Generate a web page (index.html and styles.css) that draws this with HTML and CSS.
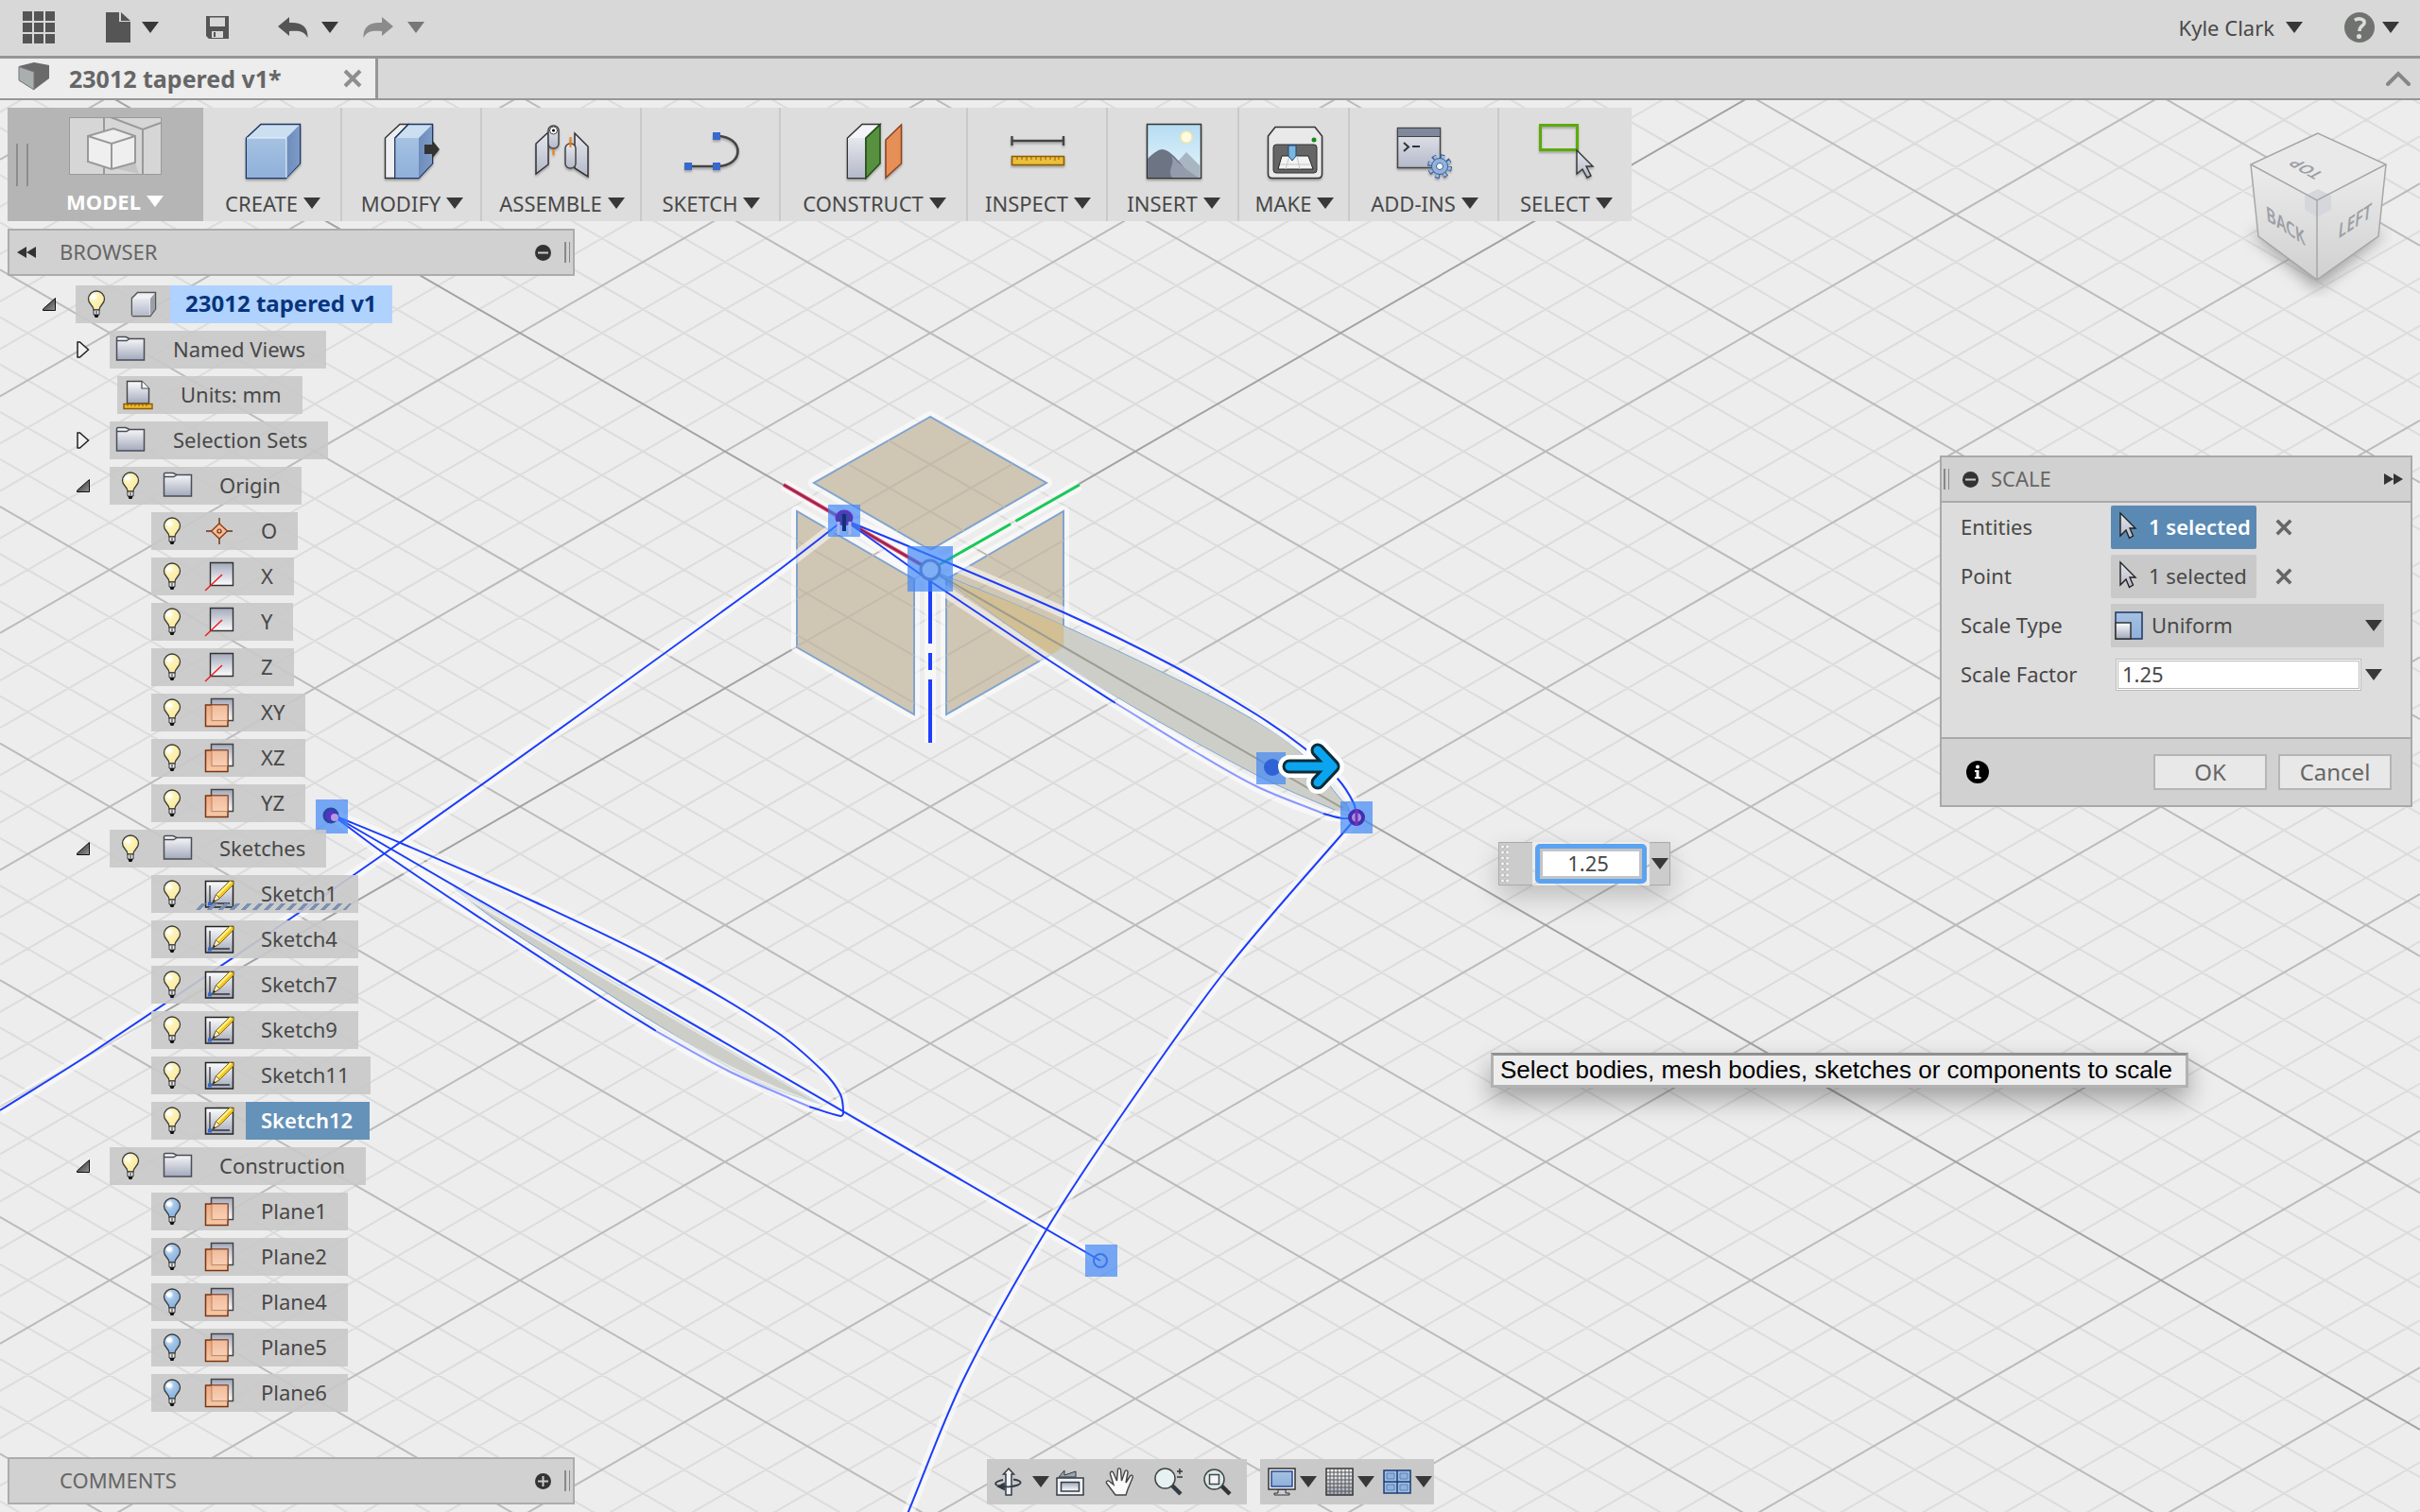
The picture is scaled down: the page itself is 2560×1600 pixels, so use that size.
FILE: index.html
```html
<!DOCTYPE html>
<html lang="en">
<head>
<meta charset="utf-8">
<title>23012 tapered v1*</title>
<link rel="stylesheet" href="styles.css">
</head>
<body>
<svg class="defs" width="0" height="0" aria-hidden="true">
  <defs>
    <linearGradient id="gBlue" x1="0" y1="0" x2="0" y2="1"><stop offset="0" stop-color="#a6c2e2"/><stop offset="1" stop-color="#8fb0da"/></linearGradient>
    <linearGradient id="gBlueSide" x1="0" y1="0" x2="1" y2="0"><stop offset="0" stop-color="#6c8cbb"/><stop offset="1" stop-color="#7f9bc6"/></linearGradient>
    <linearGradient id="gGrey" x1="0" y1="0" x2="0" y2="1"><stop offset="0" stop-color="#fdfdfe"/><stop offset="1" stop-color="#a3a9bb"/></linearGradient>
    <linearGradient id="gGreyUp" x1="0" y1="0" x2="0" y2="1"><stop offset="0" stop-color="#a3a9bb"/><stop offset="1" stop-color="#fdfdfe"/></linearGradient>
    <linearGradient id="gSoft" x1="0" y1="0" x2="0" y2="1"><stop offset="0" stop-color="#e6e8ee"/><stop offset="1" stop-color="#b4b9c9"/></linearGradient>
    <linearGradient id="gDark" x1="0" y1="0" x2="1" y2="1"><stop offset="0" stop-color="#222"/><stop offset="1" stop-color="#999"/></linearGradient>
    <linearGradient id="gSky" x1="0" y1="0" x2="0" y2="1"><stop offset="0" stop-color="#b5dcf2"/><stop offset="1" stop-color="#e8f6fc"/></linearGradient>
    <radialGradient id="gBulb" cx=".35" cy=".3" r=".7"><stop offset="0" stop-color="#fffef0"/><stop offset=".4" stop-color="#fdf2b5"/><stop offset="1" stop-color="#fbe9a0"/></radialGradient>
    <radialGradient id="gBulbOff" cx=".35" cy=".3" r=".7"><stop offset="0" stop-color="#fff"/><stop offset=".4" stop-color="#a5c6e8"/><stop offset="1" stop-color="#86b2e0"/></radialGradient>
    <linearGradient id="gPeach" x1="0" y1="0" x2="0" y2="1"><stop offset="0" stop-color="#f0a577"/><stop offset="1" stop-color="#f9c8a4"/></linearGradient>

    <symbol id="caret" viewBox="0 0 18 12"><path d="M0 0H18L9 12Z" fill="currentColor"/></symbol>
    <symbol id="bulb" viewBox="0 0 20 30"><path d="M7 21C7 16 1.500 15 1.500 9.500A8.500 8.500 0 0 1 18.500 9.500C18.500 15 13 16 13 21Z" fill="url(#gBulb)" stroke="#3b3b3b" stroke-width="1.300"/><ellipse cx="7" cy="7" rx="3" ry="2.500" fill="#fff"/><path d="M7 21h6v5H7z" fill="#eee" stroke="#333"/><path d="M10 21v5" stroke="#888" stroke-width="2"/><path d="M7.500 26h5l-1 3h-3z" fill="#111"/></symbol>
    <symbol id="bulb-off" viewBox="0 0 20 30"><path d="M7 21C7 16 1.500 15 1.500 9.500A8.500 8.500 0 0 1 18.500 9.500C18.500 15 13 16 13 21Z" fill="url(#gBulbOff)" stroke="#3b3b3b" stroke-width="1.300"/><ellipse cx="7" cy="7" rx="3" ry="2.500" fill="#fff"/><path d="M7 21h6v5H7z" fill="#eee" stroke="#333"/><path d="M10 21v5" stroke="#888" stroke-width="2"/><path d="M7.500 26h5l-1 3h-3z" fill="#111"/></symbol>
    <symbol id="folder" viewBox="0 0 32 30"><path d="M1.500 26V2.500Q1.500 1.500 3 1.500H11L15 3.500H30.500V26Z" fill="url(#gGrey)" stroke="#4a4d57" stroke-width="1.500"/><path d="M2 5.500H12L15 3.500" fill="none" stroke="#4a4d57" stroke-width="1.300"/></symbol>
    <symbol id="plane" viewBox="0 0 32 32"><path d="M7.500 1.500h23v23h-23z" fill="url(#gGreyUp)" stroke="#444" stroke-width="1.500"/><path d="M1.500 8h23.500v22.500H1.500z" fill="url(#gPeach)" fill-opacity=".92" stroke="#7a3410" stroke-width="1.500"/><path d="M8 8.500h16.500v16H8z" fill="#fff" fill-opacity=".22" stroke="#c08a70"/></symbol>
    <symbol id="axis" viewBox="0 0 32 32"><path d="M6.500 1.500h24v24h-24z" fill="url(#gGreyUp)" stroke="#333" stroke-width="1.400"/><path d="M1 31L19 14" stroke="#f01c1c" stroke-width="1.500"/></symbol>
    <symbol id="point" viewBox="0 0 32 32"><path d="M2 16H30M16 2V30" stroke="#6b2f12" stroke-width="1.400"/><path d="M16 8L24.500 16L16 24L7.500 16Z" fill="#f8bd98" stroke="#8a3b12" stroke-width="1.300"/><circle cx="16" cy="16" r="2" fill="none" stroke="#6b2f12" stroke-width="1.200"/></symbol>
    <symbol id="sketch-doc" viewBox="0 0 32 32"><path d="M1.500 2.500h29v27.500h-29z" fill="url(#gGrey)" stroke="#222" stroke-width="1.500"/><path d="M6 7V26H27" fill="none" stroke="#333" stroke-width="1.300"/><path d="M4 24.500h4v4H4z" fill="#3569c8"/><path d="M9 25L12.500 16.500L26.500 2.500H31V6L16.500 20.500Z" fill="#f7c816" stroke="#6b5410" stroke-width=".8"/><path d="M9 25L12.500 16.500L16.500 20.500Z" fill="#f9ead6" stroke="#5b4a12" stroke-width=".8"/><path d="M14 17.500L28.500 3" stroke="#fff29a" stroke-width="2"/><path d="M9 25L10.300 21.700L12.200 23.500Z" fill="#222"/></symbol>
    <symbol id="units-doc" viewBox="0 0 32 32"><path d="M4.500 25V1.500H20L27.500 9V25Z" fill="url(#gGrey)" stroke="#444" stroke-width="1.400"/><path d="M20 1.500V9H27.500" fill="#fff" stroke="#444" stroke-width="1.200"/><path d="M1 25.500h30v5H1z" fill="#f0bb30" stroke="#8d5b06" stroke-width="1.400"/><path d="M5 26v2m4-2v2m4-2v2m4-2v2m4-2v2m4-2v2" stroke="#8d5b06"/></symbol>
    <symbol id="part" viewBox="0 0 28 28"><path d="M1.500 7.500L7.500 1.500H26.500V19L21 26.500H2.500L1.500 25Z" fill="#f0f0f2" stroke="#555" stroke-width="1.500"/><path d="M2 8H20.500V26H2Z" fill="url(#gSoft)"/><path d="M21 8L26 2V19L21 26Z" fill="#9b9fa8"/></symbol>
    <symbol id="cursor" viewBox="0 0 20 32"><path d="M2 2L18 18H12L15.500 26L11.500 28.500L8 20L2 26Z" fill="url(#gSoft)" stroke="#222" stroke-width="1.400"/></symbol>
    <symbol id="open" viewBox="0 0 14 14"><path d="M13.500 .5V13.500H.5V12Z" fill="url(#gDark)" stroke="#111"/></symbol>
    <symbol id="closed" viewBox="0 0 14 18"><path d="M1 1H3.500L12.500 9L3.500 17H1Z" fill="#f2f2f2" stroke="#222" stroke-width="1.500"/></symbol>
    <symbol id="cross" viewBox="0 0 20 20"><path d="M2 2L18 18M18 2L2 18" stroke="currentColor" stroke-width="4" fill="none"/></symbol>
    <symbol id="rewind" viewBox="0 0 20 12"><path d="M10 0V12L0 6ZM20 0V12L10 6Z" fill="currentColor"/></symbol>
  </defs>
</svg>

<svg class="scene" viewBox="0 0 2560 1600" preserveAspectRatio="xMidYMid slice" aria-hidden="true">
  <g id="grid" fill="none">
    <path class="grid-minor"/><path class="grid-major"/><path class="grid-axis"/>
  </g>
  <g class="planes">
    <g class="halo"><path d="M984 441L861 511L984 582L1107 511ZM843 541V685L967 756V613ZM1125 541V685L1001 756V613Z"/></g>
    <path class="plane" d="M984 441L861 511L984 582L1107 511Z"/>
    <path class="plane" d="M843 541V685L967 756V613Z"/>
    <path class="plane" d="M1125 541V685L1001 756V613Z"/>
    <path class="plane-grid" d="M984 603L843 684M984 603L1125 684M940 466L1063 537M897 491L1020 562M1028 466L905 537M1071 491L948 562M843 572L967 643M843 622L967 694M843 672L967 744M1125 572L1001 643M1125 622L1001 694M1125 672L1001 744M843 634L940 578M843 584L890 558M1028 578L1125 634"/>
  </g>
  <path class="section" data-through="984,603 1068,637 1125,662 1231,712 1318,757 1374,795 1416,843 1427,861 1412,857 1329,820 1180,737 1111,693 1019,627 984,603"/>
  <path d="M1000 611L1068 637L1125 662V684L1111 693L1019 627Z" fill="#d2bf94"/>
  <path d="M984 603L1420 855" stroke="#9c9c92" stroke-width="2"/>
  <path class="section" data-through="483,942 529,977 644,1052 743,1113 805,1147 870,1169" data-close="L480 939"/>

  <g class="halo">
    <path d="M829 513L984 603L1142 513M984 603V786"/>
    <path data-through="893,550 961,578 1125,648 1240,704 1329,756 1379,791 1415,824 1432,850 1435,865"/>
    <path data-through="893,550 956,595 984,615 1104,695 1180,744 1329,832 1400,861 1435,865"/>
    <path data-through="893,550 800,621 407,903 100,1112 0,1175"/>
    <path data-through="1435,865 1298,1025 1192,1172 1109,1298 1020,1458 960,1602"/>
    <path data-through="351,862 426,893 567,955 697,1018 820,1091 870,1133 889,1158 892,1178 889,1181 835,1162 770,1133 694,1091 636,1055 521,980 409,905 351,862"/>
    <path d="M351 862L1164 1334"/>
  </g>
  <path d="M829 513L984 603" stroke="#f0405a" stroke-width="4"/><path d="M829 513L984 603" stroke="#7a2860" stroke-width="2"/>
  <path d="M984 603L1142 513" stroke="#18c95a" stroke-width="3" stroke-dasharray="98 6"/>
  <path d="M984 603V786" stroke="#1f3dff" stroke-width="4" stroke-dasharray="78 10 18 10 100"/>
  <g class="sketch">
    <path data-through="893,550 961,578 1125,648 1240,704 1329,756 1379,791 1415,824 1432,850 1435,865"/>
    <path data-through="893,550 956,595 984,615 1104,695 1180,744"/>
    <path class="faint" data-through="1180,744 1260,793 1329,832 1400,861"/>
    <path data-through="1400,861 1420,866 1435,865"/>
    <path data-through="893,550 800,621 407,903 100,1112 0,1175"/>
    <path data-through="1435,865 1298,1025 1192,1172 1109,1298 1020,1458 960,1602"/>
    <path data-through="351,862 426,893 567,955 697,1018 820,1091 870,1133 889,1158 892,1178 889,1181 856,1171"/>
    <path data-through="351,862 409,905 521,980 636,1055 694,1091"/>
    <path class="faint" data-through="694,1091 770,1133 835,1162 856,1171"/>
    <path d="M351 862L1164 1334"/>
  </g>
  <g class="marks">
    <path d="M876 534h34v34h-34zM960 578h48v48h-48zM1329 796h31v34h-31zM1418 848h34v34h-34zM334 846h34v36h-34zM1148 1317h34v34h-34z"/>
    <ellipse cx="893" cy="548" rx="8" ry="7" fill="#3a48a8" stroke="#5a38c0" stroke-width="3"/><path d="M893 544V562" stroke="#14307c" stroke-width="4"/><path d="M887 552V566M899 552V566" stroke="#aab4ee" stroke-width="3"/>
    <circle cx="984" cy="603" r="10" fill="#7fb0f5" stroke="#4f82d8" stroke-width="3"/>
    <circle cx="1346" cy="812" r="9" fill="#2f62d4"/>
    <circle cx="1435" cy="865" r="7" fill="#a394dc" stroke="#4030b0" stroke-width="4"/><path d="M1435 856V874" stroke="#7a2fc0" stroke-width="3"/>
    <circle cx="350" cy="863" r="7" fill="#5a30c8" stroke="#27489c" stroke-width="3"/><circle cx="354" cy="865" r="4" fill="#b49ce0"/>
    <circle cx="1164" cy="1334" r="7" fill="none" stroke="#3f74e6" stroke-width="2"/>
  </g>
  <g class="manipulator"><path d="M1364 811H1408M1394 794L1410 811L1394 828" stroke="#fff" stroke-width="24"/><path d="M1364 811H1408M1394 794L1410 811L1394 828" stroke="#0b2c3a" stroke-width="15"/><path d="M1364 811H1408M1394 794L1410 811L1394 828" stroke="#0aa5ee" stroke-width="9"/></g>
</svg>

<header class="topbar">
  <div class="quick">
    <button class="tool" aria-label="Data panel"><svg width="34" height="34" viewBox="0 0 34 34"><path fill="currentColor" d="M0 0h10v10H0zM12 0h10v10H12zM24 0h10v10H24zM0 12h10v10H0zM12 12h10v10H12zM24 12h10v10H24zM0 24h10v10H0zM12 24h10v10H12zM24 24h10v10H24z"/></svg></button>
    <button class="tool file" aria-label="File"><svg width="26" height="32" viewBox="0 0 26 32"><path fill="currentColor" d="M0 0H14V10H26V32H0ZM16 0L26 9H16Z"/></svg><svg class="caret"><use href="#caret"/></svg></button>
    <button class="tool save" aria-label="Save"><svg width="24" height="24" viewBox="0 0 24 24"><path fill="currentColor" fill-rule="evenodd" d="M0 0H24V24H3L0 21ZM4 1.500V11H20V1.500ZM6 16V23H18V16ZM8 17H10V22H8Z"/></svg></button>
    <button class="tool undo" aria-label="Undo"><svg width="32" height="22" viewBox="0 0 32 22"><path fill="currentColor" d="M0 10L12 0V6C25 5 32 10 31.500 22C28 15 22 14 12 15V20Z"/></svg><svg class="caret"><use href="#caret"/></svg></button>
    <button class="tool redo" aria-label="Redo"><svg width="32" height="22" viewBox="0 0 32 22"><path fill="currentColor" d="M32 10L20 0V6C7 5 0 10 .5 22C4 15 10 14 20 15V20Z"/></svg><svg class="caret"><use href="#caret"/></svg></button>
  </div>
  <div class="account">
    <button class="tool user">Kyle Clark<svg class="caret"><use href="#caret"/></svg></button>
    <button class="tool help" aria-label="Help"><svg width="32" height="32" viewBox="0 0 32 32"><circle cx="16" cy="16" r="16" fill="#6f726f"/><path d="M11 8.500C15 5.500 22 7 21 11.500C20.500 14.500 16 14.500 16 20" fill="none" stroke="#dcdcdc" stroke-width="3.600"/><circle cx="15.500" cy="25.500" r="2.600" fill="#dcdcdc"/></svg><svg class="caret"><use href="#caret"/></svg></button>
  </div>
</header>

<nav class="tabs">
  <div class="tab"><svg width="34" height="30" viewBox="0 0 34 30"><path d="M1 4L17 0L33 3V17L17 29L1 19Z" fill="#6a6a6a"/><path d="M1 4.500L17 10V29L1 19Z" fill="#a9aeae" stroke="#777"/></svg><a href="#model">23012 tapered v1*</a><button class="tool close" aria-label="Close tab"><svg width="20" height="20"><use href="#cross"/></svg></button></div>
  <button class="tool collapse" aria-label="Collapse"><svg width="26" height="16" viewBox="0 0 26 16"><path d="M2 14L13 3L24 14" fill="none" stroke="#85858a" stroke-width="4" stroke-linecap="round"/></svg></button>
</nav>

<main class="workspace" id="model">
  <div class="ribbon">
    <button class="cell model"><svg width="98" height="61" viewBox="0 0 98 61"><path d="M.5 .5h97v60H.500z" fill="#d6d6d6" stroke="#999"/><path d="M37 0V61M44 0L78 13L97 6M78 13V61" fill="none" stroke="#999" stroke-width="2"/><path d="M47 54L70 48L74 60Z" fill="#c4c4c4"/><path d="M20 20L47 12L70 20V48L45 55L20 47Z" fill="#efefef" stroke="#999" stroke-width="2"/><path d="M20 20L45 28L70 20M45 28V55" fill="none" stroke="#999" stroke-width="2"/></svg><span>MODEL<svg class="caret"><use href="#caret"/></svg></span></button>
    <button class="cell"><svg class="ico" viewBox="0 0 60 60"><path d="M1.500 16L17 1.500H58.500V43L43.500 58.500H1.500Z" fill="#cbdff1" stroke="#1d3564" stroke-width="1.500"/><path d="M2 16H43.500V58H2Z" fill="url(#gBlue)"/><path d="M44 16L58 2V43L44 58Z" fill="url(#gBlueSide)"/><path d="M2 16H44V58" stroke="#e8f2fb" fill="none"/></svg><span>CREATE<svg class="caret"><use href="#caret"/></svg></span></button>
    <button class="cell"><svg class="ico" viewBox="0 0 60 60"><path d="M1.500 16L17 1.500H26L12 16V58.500H1.500Z" fill="#eceef2" stroke="#333" stroke-width="1.400"/><path d="M12 16L26 1.500H51.500V43L37 58.500H12Z" fill="#cbdff1" stroke="#1d3564" stroke-width="1.500"/><path d="M12.500 16H37V58H12.500Z" fill="url(#gBlue)"/><path d="M37 16L51 2V43L37 58Z" fill="url(#gBlueSide)"/><path d="M43 23H51V18L59 28L51 38V33H43Z" fill="#333"/></svg><span>MODIFY<svg class="caret"><use href="#caret"/></svg></span></button>
    <button class="cell"><svg class="ico" viewBox="0 0 60 60"><path d="M2 22L15 10V44L2 54Z" fill="url(#gSoft)" stroke="#333" stroke-width="1.500"/><rect x="15" y="3" width="11" height="24" rx="5" fill="url(#gSoft)" stroke="#444" stroke-width="1.500"/><circle cx="20.500" cy="8" r="4" fill="#fff" stroke="#444"/><circle cx="20.500" cy="8" r="1.500"/><path d="M43 11L57 25V57L43 48Z" fill="url(#gSoft)" stroke="#333" stroke-width="1.500"/><rect x="33" y="22" width="11" height="26" rx="5" fill="url(#gSoft)" stroke="#444" stroke-width="1.500"/><path d="M20.500 28V34M38.500 15V26" stroke="#f57b0c" stroke-width="2"/></svg><span>ASSEMBLE<svg class="caret"><use href="#caret"/></svg></span></button>
    <button class="cell"><svg class="ico" viewBox="0 0 60 60"><path d="M5 46H35C65 46 65 14 35 14" fill="none" stroke="#444" stroke-width="2.600"/><path fill="#3769cc" d="M1 42h8v8H1zM31 42h8v8h-8zM31 10h8v8h-8z"/></svg><span>SKETCH<svg class="caret"><use href="#caret"/></svg></span></button>
    <button class="cell"><svg class="ico" viewBox="0 0 60 60"><path d="M1.500 16L17 1.500H36L21 16V58.500H1.500Z" fill="#f4f5f8" stroke="#333" stroke-width="1.500"/><path d="M2 16H20V58H2Z" fill="url(#gSoft)"/><path d="M21 16L36 2V43L21 58.500Z" fill="#57913f" stroke="#234d18" stroke-width="1.500"/><path d="M42 18L58.500 2V43L42 58Z" fill="#e68f57" stroke="#8a4420" stroke-width="1.500"/></svg><span>CONSTRUCT<svg class="caret"><use href="#caret"/></svg></span></button>
    <button class="cell"><svg class="ico" viewBox="0 0 60 60"><path d="M2.500 14V24M57 14V24M2.500 19H57" stroke="#444" stroke-width="2.400"/><path d="M2.500 35.500h55v9h-55z" fill="#ecbf3b" stroke="#8d5b06" stroke-width="1.600"/><path d="M8 36v3m5-3v3m5-3v4m5-4v3m5-3v3m5-3v4m5-4v3m5-3v3m5-3v4m4-4v3" stroke="#8d5b06"/></svg><span>INSPECT<svg class="caret"><use href="#caret"/></svg></span></button>
    <button class="cell"><svg class="ico" viewBox="0 0 60 60"><path d="M1.500 1.500h57v57h-57z" fill="url(#gSky)" stroke="#333" stroke-width="1.500"/><circle cx="43" cy="15" r="6" fill="#fffbe2" stroke="#f8e7a5" stroke-width="1.500"/><path d="M30 45L43 31L58 46V58H34Z" fill="#a8b6c2"/><path d="M2 38C9 31 14 28 18 28C28 29 41 48 49 58H2Z" fill="#6d7484"/><path d="M27 35C37 44 44 51 56 58H28C22 50 32 44 27 35Z" fill="#949bac"/></svg><span>INSERT<svg class="caret"><use href="#caret"/></svg></span></button>
    <button class="cell"><svg class="ico" viewBox="0 0 60 60"><path d="M1.500 14L9 4.500H51L58.500 14V54Q58.500 58.500 54 58.500H6Q1.500 58.500 1.500 54Z" fill="#e9e9e9" stroke="#333" stroke-width="1.500"/><circle cx="50" cy="18" r="2.500" fill="#158a1c"/><rect x="7" y="23" width="46" height="30" rx="3" fill="#666" stroke="#333"/><path d="M16 35H44L49 49H12Z" fill="#f3f3f3" stroke="#222"/><path d="M14 44H47M24 35L20 49M32 35L35 49" stroke="#c5c5c5"/><path d="M23 24H31V35L27 40L23 35Z" fill="#7db5dc" stroke="#174a8c"/></svg><span>MAKE<svg class="caret"><use href="#caret"/></svg></span></button>
    <button class="cell"><svg class="ico" viewBox="0 0 60 60"><path d="M1.500 5.500h45v42h-45z" fill="url(#gSoft)" stroke="#444" stroke-width="1.500"/><path d="M2 6h44v8H2z" fill="#80889b"/><path d="M2 14.500H46" stroke="#444"/><path d="M8 21L13 25.500L8 30M17 25H25" fill="none" stroke="#333" stroke-width="2"/><circle cx="46" cy="46" r="10.500" fill="none" stroke="#3c5f94" stroke-width="5" stroke-dasharray="4.500 3.750"/><circle cx="46" cy="46" r="10" fill="none" stroke="#9dbbe2" stroke-width="4" stroke-dasharray="3 5" stroke-dashoffset="-.7"/><circle cx="46" cy="46" r="8.500" fill="#93b3de" stroke="#3c5f94"/><circle cx="46" cy="46" r="3.500" fill="#fff" stroke="#3c5f94"/></svg><span>ADD-INS<svg class="caret"><use href="#caret"/></svg></span></button>
    <button class="cell"><svg class="ico" viewBox="0 0 60 60"><path d="M2.500 2.500h39v26h-39z" fill="none" stroke="#5daa08" stroke-width="3"/><path d="M41 29L58 46H51L56 56L52 58L47 49L41 54Z" fill="url(#gSoft)" stroke="#333" stroke-width="1.400"/></svg><span>SELECT<svg class="caret"><use href="#caret"/></svg></span></button>
  </div>

  <svg class="viewcube" viewBox="0 0 160 180" aria-label="View cube">
    <defs><filter id="soft" x="-50%" y="-50%" width="200%" height="200%"><feGaussianBlur stdDeviation="8"/></filter><linearGradient id="gCube" x1="0" y1="0" x2="0" y2="1"><stop offset="0" stop-color="#ececec"/><stop offset="1" stop-color="#d0d0d0"/></linearGradient></defs>
    <path d="M10 112L80 172L152 112L80 100Z" fill="#888" opacity=".7" filter="url(#soft)"/>
    <path d="M81 6L10 39L80 77L153 39Z" fill="#e9e9e9"/><path d="M10 39L80 77V161L18 115Z" fill="url(#gCube)"/><path d="M153 39L80 77V161L145 115Z" fill="url(#gCube)"/>
    <path d="M81 65L95 72V87L80 95L67 87V72Z" fill="#d5d7dd"/>
    <path d="M81 6L10 39L80 77L153 39ZM10 39L18 115L80 161L145 115L153 39M80 77V161" fill="none" stroke="#a6a6a6" stroke-width="1.500"/>
    <g class="face"><text transform="matrix(.72 .48 .1 1 27 98)">BACK</text><text transform="matrix(.72 -.48 -.1 1 102 118)">LEFT</text><text transform="matrix(-.66 -.38 .7 -.38 88 49)">TOP</text></g>
  </svg>

  <div class="middle">
    <aside class="browser">
      <div class="bar"><svg width="20" height="12"><use href="#rewind"/></svg><h2>BROWSER</h2><button class="tool round" aria-label="Minimize browser"><svg width="17" height="17" viewBox="0 0 17 17"><circle cx="8.500" cy="8.500" r="8.500" fill="#333"/><path d="M3 8.500H14" stroke="#ccc" stroke-width="2"/></svg></button><i class="grip"></i></div>
      <ul class="tree">
        <li class="l0"><button class="tool twist" aria-label="Collapse"><svg width="14" height="14"><use href="#open"/></svg></button><div class="node"><svg class="bulb"><use href="#bulb"/></svg><svg class="kind part"><use href="#part"/></svg><span class="root">23012 tapered v1</span></div></li>
        <li class="l1"><button class="tool twist" aria-label="Expand"><svg width="14" height="18"><use href="#closed"/></svg></button><div class="node lead"><svg class="kind"><use href="#folder"/></svg><span>Named Views</span></div></li>
        <li class="lu"><div class="node lead"><svg class="kind"><use href="#units-doc"/></svg><span>Units: mm</span></div></li>
        <li class="l1"><button class="tool twist" aria-label="Expand"><svg width="14" height="18"><use href="#closed"/></svg></button><div class="node lead"><svg class="kind"><use href="#folder"/></svg><span>Selection Sets</span></div></li>
        <li class="l1"><button class="tool twist" aria-label="Collapse"><svg width="14" height="14"><use href="#open"/></svg></button><div class="node"><svg class="bulb"><use href="#bulb"/></svg><svg class="kind"><use href="#folder"/></svg><span>Origin</span></div></li>
        <li class="l2"><div class="node"><svg class="bulb"><use href="#bulb"/></svg><svg class="kind"><use href="#point"/></svg><span>O</span></div></li>
        <li class="l2"><div class="node"><svg class="bulb"><use href="#bulb"/></svg><svg class="kind"><use href="#axis"/></svg><span>X</span></div></li>
        <li class="l2"><div class="node"><svg class="bulb"><use href="#bulb"/></svg><svg class="kind"><use href="#axis"/></svg><span>Y</span></div></li>
        <li class="l2"><div class="node"><svg class="bulb"><use href="#bulb"/></svg><svg class="kind"><use href="#axis"/></svg><span>Z</span></div></li>
        <li class="l2"><div class="node"><svg class="bulb"><use href="#bulb"/></svg><svg class="kind"><use href="#plane"/></svg><span>XY</span></div></li>
        <li class="l2"><div class="node"><svg class="bulb"><use href="#bulb"/></svg><svg class="kind"><use href="#plane"/></svg><span>XZ</span></div></li>
        <li class="l2"><div class="node"><svg class="bulb"><use href="#bulb"/></svg><svg class="kind"><use href="#plane"/></svg><span>YZ</span></div></li>
        <li class="l1"><button class="tool twist" aria-label="Collapse"><svg width="14" height="14"><use href="#open"/></svg></button><div class="node"><svg class="bulb"><use href="#bulb"/></svg><svg class="kind"><use href="#folder"/></svg><span>Sketches</span></div></li>
        <li class="l2"><div class="node hatched"><svg class="bulb"><use href="#bulb"/></svg><svg class="kind"><use href="#sketch-doc"/></svg><span>Sketch1</span></div></li>
        <li class="l2"><div class="node"><svg class="bulb"><use href="#bulb"/></svg><svg class="kind"><use href="#sketch-doc"/></svg><span>Sketch4</span></div></li>
        <li class="l2"><div class="node"><svg class="bulb"><use href="#bulb"/></svg><svg class="kind"><use href="#sketch-doc"/></svg><span>Sketch7</span></div></li>
        <li class="l2"><div class="node"><svg class="bulb"><use href="#bulb"/></svg><svg class="kind"><use href="#sketch-doc"/></svg><span>Sketch9</span></div></li>
        <li class="l2"><div class="node"><svg class="bulb"><use href="#bulb"/></svg><svg class="kind"><use href="#sketch-doc"/></svg><span>Sketch11</span></div></li>
        <li class="l2"><div class="node"><svg class="bulb"><use href="#bulb"/></svg><svg class="kind"><use href="#sketch-doc"/></svg><span class="picked">Sketch12</span></div></li>
        <li class="l1"><button class="tool twist" aria-label="Collapse"><svg width="14" height="14"><use href="#open"/></svg></button><div class="node"><svg class="bulb"><use href="#bulb"/></svg><svg class="kind"><use href="#folder"/></svg><span>Construction</span></div></li>
        <li class="l2"><div class="node"><svg class="bulb"><use href="#bulb-off"/></svg><svg class="kind"><use href="#plane"/></svg><span>Plane1</span></div></li>
        <li class="l2"><div class="node"><svg class="bulb"><use href="#bulb-off"/></svg><svg class="kind"><use href="#plane"/></svg><span>Plane2</span></div></li>
        <li class="l2"><div class="node"><svg class="bulb"><use href="#bulb-off"/></svg><svg class="kind"><use href="#plane"/></svg><span>Plane4</span></div></li>
        <li class="l2"><div class="node"><svg class="bulb"><use href="#bulb-off"/></svg><svg class="kind"><use href="#plane"/></svg><span>Plane5</span></div></li>
        <li class="l2"><div class="node"><svg class="bulb"><use href="#bulb-off"/></svg><svg class="kind"><use href="#plane"/></svg><span>Plane6</span></div></li>
      </ul>
    </aside>

    <form class="dialog" onsubmit="return false">
      <div class="dialog-head"><i class="grip"></i><svg width="17" height="17" viewBox="0 0 17 17"><circle cx="8.500" cy="8.500" r="8.500" fill="#333"/><path d="M3 8.500H14" stroke="#ccc" stroke-width="2"/></svg><h2>SCALE</h2><svg class="forward" width="20" height="12" viewBox="0 0 20 12"><path d="M0 0V12L10 6ZM10 0V12L20 6Z" fill="#333"/></svg></div>
      <div class="dialog-body">
        <label for="entities">Entities</label><div class="field"><button id="entities" type="button" class="pick active"><svg width="20" height="32"><use href="#cursor"/></svg>1 selected</button><button type="button" class="tool clear" aria-label="Clear entities"><svg width="18" height="18"><use href="#cross"/></svg></button></div>
        <label for="point-pick">Point</label><div class="field"><button id="point-pick" type="button" class="pick"><svg width="20" height="32"><use href="#cursor"/></svg>1 selected</button><button type="button" class="tool clear" aria-label="Clear point"><svg width="18" height="18"><use href="#cross"/></svg></button></div>
        <label for="type">Scale Type</label><div class="field"><div class="choice"><svg width="30" height="30" viewBox="0 0 30 30"><path d="M1 1h28v28H1z" fill="url(#gBlue)" stroke="#1d3564" stroke-width="1.500"/><path d="M1 12h16v17H1z" fill="url(#gGrey)" stroke="#333" stroke-width="1.500"/></svg><select id="type"><option>Uniform</option><option>Non Uniform</option></select><svg class="caret"><use href="#caret"/></svg></div></div>
        <label for="factor">Scale Factor</label><div class="field"><input id="factor" class="factor" type="text" value="1.25"><svg class="caret"><use href="#caret"/></svg></div>
      </div>
      <div class="dialog-foot"><svg width="24" height="24" viewBox="0 0 24 24"><circle cx="12" cy="12" r="12"/><path d="M9 10H13.500V17H15.500V19H9V17H10.500V12H9Z" fill="#fff"/><circle cx="12" cy="6.500" r="2" fill="#fff"/></svg><button type="button" class="action ok">OK</button><button type="button" class="action">Cancel</button></div>
    </form>
  </div>

  <div class="bottom">
    <div class="bar comments"><h2>COMMENTS</h2><button class="tool round" aria-label="Expand comments"><svg width="17" height="17" viewBox="0 0 17 17"><circle cx="8.500" cy="8.500" r="8.500" fill="#333"/><path d="M3 8.500H14M8.500 3V14" stroke="#ccc" stroke-width="2"/></svg></button><i class="grip"></i></div>
    <div class="navs">
      <div class="nav view">
        <button class="tool" aria-label="Orbit"><svg width="30" height="32" viewBox="0 0 30 32"><path d="M9 14C-2 16 -2 21 12 21C30 21 32 15 20 13.500M4 21L10 18V24Z" fill="none" stroke="#333c48" stroke-width="1.800"/><path d="M15 2L20.500 8H18V30H12V8H9.500Z" fill="#f1f2f5" stroke="#333c48" stroke-width="1.500"/><path d="M4 21L9 18V24Z" fill="#333"/><path d="M5 20C10 22 20 22 26 19" fill="none" stroke="#333c48" stroke-width="1.800"/></svg><svg class="caret"><use href="#caret"/></svg></button>
        <button class="tool look" aria-label="Look at"><svg width="30" height="32" viewBox="0 0 30 32"><path d="M3 11L9 4V9L21 5V11Z" fill="#9ba5b0" stroke="#333c48"/><path d="M1 12h28v18H1z" fill="#f3f3f5" stroke="#333c48" stroke-width="1.500"/><path d="M5.500 16.500h19v9.500h-19z" fill="url(#gGreyUp)" stroke="#333c48" stroke-width="1.500"/></svg></button>
        <button class="tool pan" aria-label="Pan"><svg width="30" height="32" viewBox="0 0 30 32"><path d="M11 30L2 18C0 16 3 14 4.500 15.500L9 19L5.500 8C5 5 8 4 9 7L12.500 15L13.500 3.500C13.500 1 16.500 1 16.500 3.500L17.500 15L21 5C22 3 24.500 4 24 6.500L22 17L26.500 10C28 8 30 9.500 29 12L24 24L22 30Z" fill="#fafafa" stroke="#444" stroke-width="1.400"/></svg></button>
        <button class="tool zoom" aria-label="Zoom"><svg width="30" height="32" viewBox="0 0 30 32"><path d="M19 20L28 29" stroke="#333c44" stroke-width="4.500"/><circle cx="11.500" cy="12.500" r="10.500" fill="#e6f2f1" stroke="#444" stroke-width="1.500"/><path d="M24 5H30M27 2V8M24 11H30" stroke="#333" stroke-width="1.400"/></svg></button>
        <button class="tool fit" aria-label="Fit"><svg width="30" height="32" viewBox="0 0 30 32"><path d="M19 20L28 29" stroke="#333" stroke-width="4.500"/><circle cx="11.500" cy="13.500" r="10.500" fill="#d8ebe9" stroke="#444" stroke-width="1.500"/><path d="M6.500 8.500h10v10h-10z" fill="#f5f5f9" stroke="#444" stroke-width="1.500"/></svg></button>
      </div>
      <div class="nav display">
        <button class="tool" aria-label="Display settings"><svg width="30" height="32" viewBox="0 0 30 32"><path d="M11 24H19V28H23V30H7V28H11Z" fill="#ccd" stroke="#333"/><path d="M1 2h28v22H1z" fill="#f2f4f8" stroke="#333" stroke-width="1.500"/><path d="M4 5h22v16H4z" fill="url(#gBlue)" stroke="#2a4a90" stroke-width="1.500"/></svg><svg class="caret"><use href="#caret"/></svg></button>
        <button class="tool" aria-label="Grid settings"><svg width="30" height="32" viewBox="0 0 30 32"><path d="M1 2h28v28H1z" fill="url(#gGrey)" stroke="#333" stroke-width="1.500"/><path d="M5 2v28m4-28v28m4-28v28m4-28v28m4-28v28m4-28v28M1 6h28M1 10h28M1 14h28M1 18h28M1 22h28M1 26h28" stroke="#555"/></svg><svg class="caret"><use href="#caret"/></svg></button>
        <button class="tool" aria-label="Viewports"><svg width="30" height="32" viewBox="0 0 30 32"><path d="M1 4h28v24H1z" fill="#9dbde2" stroke="#1d3c74" stroke-width="1.500"/><path d="M15 4v24M1 16h28" stroke="#1d3c74" stroke-width="1.500"/><path d="M4 7h8v6H4zM18 7h8v6h-8zM4 19h8v6H4zM18 19h8v6h-8z" fill="#8fb2dd" stroke="#5e80b2"/></svg><svg class="caret"><use href="#caret"/></svg></button>
      </div>
    </div>
  </div>

  <div class="hud"><i class="hud-grip"></i><input type="text" value="1.25" aria-label="Scale factor"><button class="hud-menu" aria-label="More"><svg class="caret"><use href="#caret"/></svg></button></div>
  <div class="tip" role="tooltip">Select bodies, mesh bodies, sketches or components to scale</div>
</main>
<script src="scene.js"></script>
</body>
</html>
```
FILE: styles.css
```css
* { box-sizing: border-box; }
body {
  margin: 0;
  min-height: 100vh;
  display: flex;
  flex-direction: column;
  position: relative;
  overflow: hidden;
  background: #ededed;
  color: #484848;
  font: 22px/30px "Noto Sans", "Open Sans", sans-serif;
}
h2 { margin: 0; padding-bottom: 2px; font-size: 22px; font-weight: 400; color: #666; }
ul { margin: 0; padding: 0; list-style: none; }
button, input, select { font: inherit; color: inherit; margin: 0; }
svg { display: block; flex: none; }
.defs { position: absolute; }
.tool { display: flex; align-items: center; padding: 0; border: 0; background: none; }
.caret { width: 18px; height: 12px; color: #383838; }

/* drawing canvas */
.scene { position: absolute; inset: 0; width: 100%; height: 100%; }
.grid-minor { stroke: #dcdcdc; stroke-width: 2; }
.grid-major { stroke: #bbb; stroke-width: 2; }
.grid-axis { stroke: #a2a2a2; stroke-width: 2; }
.halo { fill: none; stroke: #fff; stroke-opacity: .55; stroke-width: 12; stroke-linejoin: round; }
.plane { fill: #cfc6b4; stroke: #7fa3cf; stroke-width: 2; }
.plane-grid { fill: none; stroke: #c3baa9; stroke-width: 2; }
.section { fill: #cbccc5; fill-opacity: .95; stroke: #7fa6d2; stroke-width: 1; }
.sketch { fill: none; stroke: #1c3df8; stroke-width: 2; }
.sketch .faint { stroke: #8a97ff; }
.marks > path:first-child { fill: #3b84f7; fill-opacity: .68; }
.manipulator { fill: none; stroke-linecap: round; stroke-linejoin: round; }

/* top bars */
.topbar {
  position: relative;
  display: flex;
  justify-content: space-between;
  height: 62px;
  padding: 0 22px 2px 24px;
  background: #d8d8d8;
  border-bottom: 3px solid #969696;
}
.quick, .account { display: flex; align-items: center; }
.quick { color: #555; }
.file { margin-left: 54px; gap: 12px; }
.save { margin-left: 50px; }
.undo { margin-left: 52px; gap: 14px; }
.redo { margin-left: 26px; gap: 15px; color: #8b8b8b; }
.redo .caret { color: #777; }
.user { gap: 12px; }
.help { margin-left: 44px; gap: 8px; }
.tabs {
  position: relative;
  display: flex;
  justify-content: space-between;
  height: 44px;
  padding-right: 10px;
  background: #d8d8d8;
  border-bottom: 2px solid #969696;
}
.tab {
  display: flex;
  align-items: center;
  width: 400px;
  padding: 0 14px 0 19px;
  background: #ededed;
  border-right: 3px solid #969696;
}
.tab > svg { margin-bottom: 4px; }
.tab a { margin-left: 20px; font-size: 25px; font-weight: 700; color: #666; text-decoration: none; }
.close { margin-left: auto; color: #8d8d92; }

/* workspace */
.workspace {
  flex: 1;
  position: relative;
  display: flex;
  flex-direction: column;
  gap: 8px;
  padding: 8px;
}
.ribbon {
  align-self: flex-start;
  display: grid;
  grid-template-columns: 207px 147px 148px 169px 147px 198px 148px 139px 117px 158px 140px;
  height: 120px;
  background: #ddd;
}
.cell {
  display: flex;
  flex-direction: column;
  align-items: center;
  gap: 10px;
  padding: 16px 0 0 2px;
  border: 0;
  border-right: 2px solid #c9c9c9;
  background: none;
  font-size: 22px;
  line-height: 30px;
}
.cell:last-child { border: 0; }
.cell span { display: flex; align-items: center; gap: 6px; }
.ico { width: 60px; height: 60px; filter: drop-shadow(0 2px 1px #0004); }
.model {
  position: relative;
  padding-top: 10px;
  padding-left: 22px;
  gap: 13px;
  background: #b5b5b5;
  border-color: #b5b5b5;
  color: #fff;
  font-weight: 700;
}
.model::before { content: ""; position: absolute; left: 9px; top: 38px; width: 9px; height: 45px; border: solid #8d8d8d; border-width: 0 2px; }
.model .caret { color: #fff; }

.viewcube { position: absolute; top: 29px; right: 29px; width: 160px; height: 180px; }
.face { font-size: 22px; font-weight: 600; fill: #9c9fa6; }

.middle { flex: 1; display: flex; justify-content: space-between; align-items: flex-start; }
.bar {
  display: flex;
  align-items: center;
  width: 600px;
  height: 50px;
  padding: 0 3px 0 8px;
  background: #d1d1d1;
  border: 2px solid #acacac;
  color: #333;
}
.bar h2 { margin-left: 25px; }
.comments h2 { margin-left: 45px; }
.round { margin: 0 14px 0 auto; }
.grip { width: 6px; height: 22px; border: solid #888; border-width: 0 1px 0 2px; }

.tree { display: flex; flex-direction: column; gap: 8px; padding-top: 10px; }
.tree li { display: flex; align-items: center; height: 40px; }
.l0 { padding-left: 37px; }
.l1 { padding-left: 73px; }
.lu { padding-left: 116px; }
.l2 { padding-left: 152px; }
.twist { width: 35px; }
.node { position: relative; display: flex; align-items: center; height: 40px; background: #c8c8c8e8; }
.node span { height: 40px; padding: 0 22px 0 16px; line-height: 38px; }
.bulb { width: 20px; height: 30px; margin: 0 12px; }
.kind { width: 32px; height: 32px; margin: 0 12px; }
.part { width: 28px; height: 28px; margin: 0 14px; }
.lead .kind { margin: 0 13px 0 6px; }
.node .root { background: #b0d2ff; color: #06357c; font-size: 24px; font-weight: 700; padding-right: 16px; }
.node .picked { background: #6592b9; color: #fff; font-weight: 600; padding-right: 18px; }
.hatched::after {
  content: "";
  position: absolute;
  left: 50px;
  right: 10px;
  bottom: 3px;
  height: 7px;
  background: repeating-linear-gradient(90deg, #7a90b4 0 5px, transparent 5px 12px);
  transform: skewX(-40deg);
}

/* scale dialog */
.dialog { width: 500px; margin-top: 240px; background: #ddd; border: 2px solid #a9a9a9; }
.dialog-head { display: flex; align-items: center; height: 48px; padding: 0 8px 0 2px; background: #d1d1d1; border-bottom: 2px solid #a9a9a9; }
.dialog-head svg { margin-left: 14px; }
.dialog-head h2 { margin-left: 13px; }
.dialog-head .forward { margin-left: auto; }
.dialog-body { display: grid; grid-template-columns: 159px 1fr; row-gap: 6px; padding: 3px 28px 43px 20px; align-items: center; }
.dialog-body label { padding-bottom: 2px; }
.field { display: flex; align-items: center; height: 46px; }
.pick { display: flex; align-items: center; gap: 12px; height: 46px; padding: 0 0 2px 8px; width: 154px; border: 0; border-radius: 2px; background: #c9c9c9; white-space: nowrap; }
.pick.active { background: #5a8ab4; color: #fff; font-weight: 600; }
.clear { margin-left: 20px; color: #666; }
.choice { position: relative; flex: 1; display: flex; align-items: center; height: 46px; background: #c9c9c9; }
.choice > svg { position: absolute; left: 4px; pointer-events: none; }
.choice > .caret { left: auto; right: 2px; }
.choice select { appearance: none; width: 100%; height: 46px; padding: 0 0 2px 43px; border: 0; background: none; }
.factor { width: 260px; height: 34px; margin: 0 4px 0 5px; padding: 0 4px 2px; border: 3px double #bbb; background: #fff; }
.dialog-foot { display: flex; align-items: center; height: 72px; padding: 0 20px 0 26px; background: #d1d1d1; border-top: 2px solid #a9a9a9; }
.action { width: 120px; height: 38px; padding: 0; border: 2px solid #b5b5b5; background: #e8e8e8; color: #666; font-size: 24px; line-height: 30px; }
.ok { margin: 0 12px 0 auto; }

/* bottom */
.bottom { display: grid; grid-template-columns: 1fr auto 1fr; align-items: end; }
.navs { display: flex; gap: 14px; }
.nav { display: flex; align-items: center; height: 48px; background: #c9c9c9; padding: 0 2px 0 8px; }
.view { padding-right: 16px; }
.view .tool:first-child { gap: 10px; }
.look { margin-left: 7px; }
.pan { margin-left: 22px; }
.zoom, .fit { margin-left: 22px; }
.display { gap: 9px; }
.display .tool { gap: 4px; }

/* overlays */
.hud { position: absolute; left: 1585px; top: 785px; display: flex; align-items: center; gap: 3px; box-shadow: 0 12px 28px #0003; }
.hud-grip { width: 36px; height: 46px; background: #ccc; border: solid #aaa; border-width: 1px 0 1px 1px; }
.hud-grip::before { content: ""; display: block; width: 9px; height: 42px; margin: 1px 0 0 1px; background: radial-gradient(circle, #f2f2f2 1px, #bbb 2px, transparent 3px) 0 0 / 5px 6px; }
.hud input { width: 118px; height: 42px; border: 5px solid #5ba3f1; border-radius: 5px; padding: 0 6px 2px 0; text-align: center; background: #fff; box-shadow: inset 0 0 0 3px #c4c4c4; }
.hud-menu { width: 22px; height: 46px; padding: 0 0 0 2px; border: solid #aaa; border-width: 1px 1px 1px 0; background: #ccc; }
.tip {
  position: absolute;
  left: 1577px;
  top: 1008px;
  padding: 0 14px 0 7px;
  border: 3px solid #b2b2b2;
  border-top-color: #909090;
  background: #ededed;
  color: #000;
  font: 26px/31px "Liberation Sans", Arial, sans-serif;
  white-space: nowrap;
  box-shadow: 0 12px 26px #0005;
}
```
FILE: scene.js
```js
// Isometric ground grid: every fifth line is a major one, the two through the origin are the axes.
const ORIGIN = { x: 984, y: 603 };
const SLOPE = 125.3 / 217;
const STEP = 250.6 / 5;
const lines = { minor: '', major: '', axis: '' };
for (let k = -50; k <= 50; k++) {
  const kind = k === 0 ? 'axis' : k % 5 === 0 ? 'major' : 'minor';
  for (const s of [SLOPE, -SLOPE]) {
    const at = x => (ORIGIN.y + k * STEP + s * (x - ORIGIN.x)).toFixed(1);
    lines[kind] += `M0 ${at(0)}L2560 ${at(2560)}`;
  }
}
for (const kind in lines) document.querySelector('.grid-' + kind).setAttribute('d', lines[kind]);

// Sketch splines: a smooth curve through the listed fit points.
for (const path of document.querySelectorAll('[data-through]')) {
  const p = path.dataset.through.split(' ').map(s => s.split(',').map(Number));
  let d = `M${p[0]}`;
  for (let i = 0; i < p.length - 1; i++) {
    const a = p[i - 1] || p[i], b = p[i], c = p[i + 1], e = p[i + 2] || c;
    const len = Math.hypot(c[0] - b[0], c[1] - b[1]);
    const handle = (from, to, at, sign) => {
      const m = Math.hypot(to[0] - from[0], to[1] - from[1]) || 1;
      return [0, 1].map(j => (at[j] + sign * (to[j] - from[j]) / m * len / 3).toFixed(1));
    };
    d += `C${handle(a, c, b, 1)} ${handle(b, e, c, -1)} ${c}`;
  }
  path.setAttribute('d', d + (path.dataset.close || ''));
}
```
